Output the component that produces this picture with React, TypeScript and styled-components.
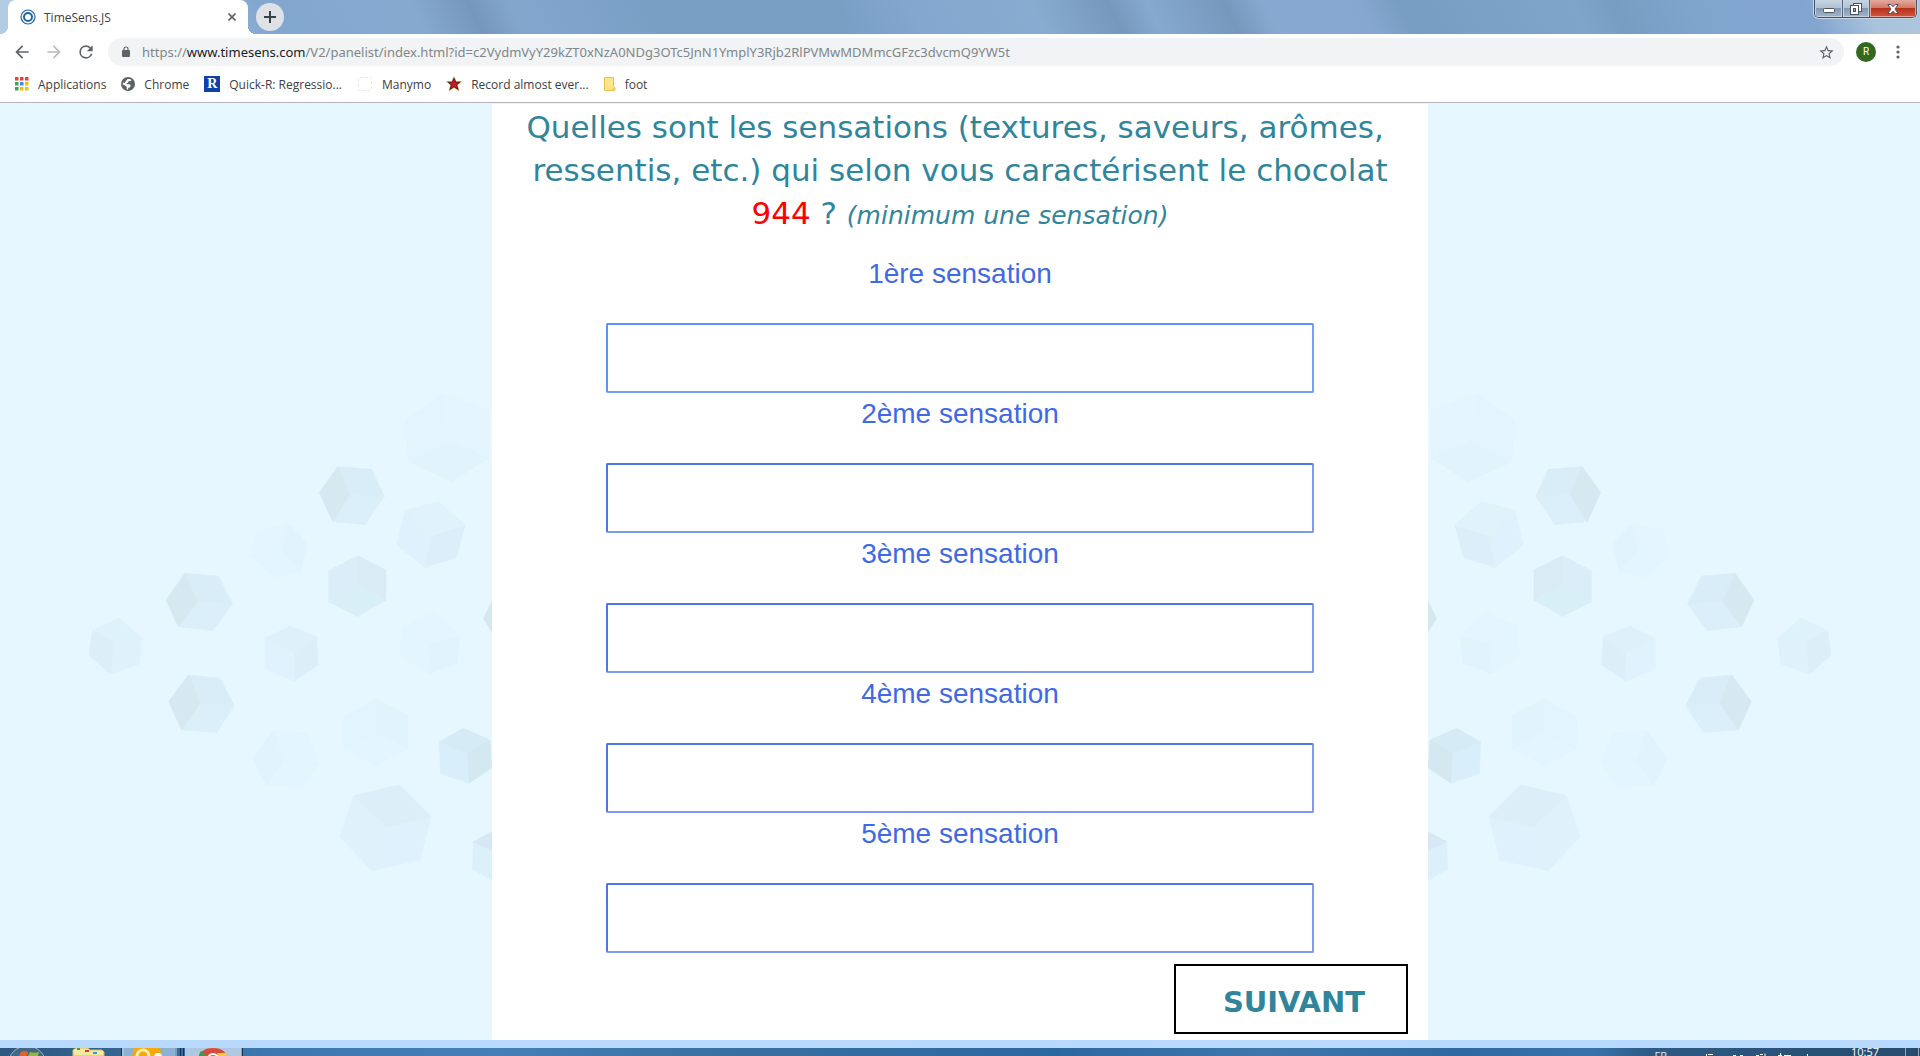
import React from 'react';
import styled, { createGlobalStyle } from 'styled-components';

const GlobalStyle = createGlobalStyle`
  * { box-sizing: border-box; }
  body { margin: 0; }
  button, input { font: inherit; margin: 0; padding: 0; }
  button { border: 0; background: none; color: inherit; cursor: pointer; }
  svg { display: block; flex: none; }
`;

const UI = '"Open Sans", "Noto Sans", sans-serif';
const VERDANA = 'Verdana, "DejaVu Sans", sans-serif';
const TEAL = '#31859b';

const Window = styled.div`
  display: flex;
  flex-direction: column;
  min-height: 100vh;
  background: #fff;
  font-family: ${UI};
  font-size: 12px;
  color: #3c4043;
`;

/* ---------- title bar ---------- */

const TitleBar = styled.header`
  display: flex;
  align-items: flex-start;
  height: 34px;
  background: linear-gradient(
    64deg,
    #b5cde3 0%, #a9c5df 8%, #82a7cf 14%, #86a9cf 22%, #7597bd 25%, #83a6cd 27%,
    #7a9fc5 34%, #7a9fc5 44%, #84a7cf 48%, #88abd0 54%, #7698bd 58%, #86a9cf 60%,
    #7698bd 64%, #87a9d0 66%, #86a8d0 71%, #789dc2 73%, #80a5cb 82%, #789dc2 84%,
    #80a5cd 88%, #82a5d0 94%, #a8c3dc 97%, #adc6dd 100%
  );
`;

const Tab = styled.div`
  position: relative;
  display: flex;
  align-items: center;
  width: 240px;
  height: 34px;
  margin-left: 8px;
  padding: 0 6px 0 12px;
  gap: 8px;
  border-radius: 8px 8px 0 0;
  background: #fff;
  &::before, &::after {
    content: '';
    position: absolute;
    bottom: 0;
    width: 8px;
    height: 8px;
  }
  &::before { right: 100%; background: radial-gradient(circle at 0 0, transparent 8px, #fff 8px); }
  &::after { left: 100%; background: radial-gradient(circle at 100% 0, transparent 8px, #fff 8px); }
`;

const TabTitle = styled.span`
  flex: 1;
  font-size: 12px;
`;

const IconButton = styled.button`
  display: grid;
  place-items: center;
  width: 20px;
  height: 28px;
`;

const NewTab = styled.button`
  display: grid;
  place-items: center;
  width: 28px;
  height: 28px;
  margin: 3px 0 0 8px;
  border-radius: 50%;
  background: #dee1e6;
`;

const WindowControls = styled.div`
  display: flex;
  height: 18px;
  margin: 0 3px 0 auto;
  border: 1px solid #444f5f;
  border-top: 0;
  border-radius: 0 0 5px 5px;
  box-shadow: 0 0 0 1px #c8d7e6;
  overflow: hidden;
`;

const ControlButton = styled.button<{ $close?: boolean }>`
  display: grid;
  place-items: center;
  width: ${p => (p.$close ? 47 : 27)}px;
  height: 17px;
  border-left: ${p => (p.$close ? '1px solid #4d1a14' : '0')};
  box-shadow: inset 0 0 0 1px ${p => (p.$close ? '#e2a79c' : '#c5d2e0')};
  background: ${p => (p.$close
    ? 'linear-gradient(#e3a99e 0, #d27866 8px, #b5301a 8px, #d4573c 17px)'
    : 'linear-gradient(#c7d3e1 0, #b1c1d3 8px, #7f97b1 8px, #a3b7cc 17px)')};
  & + & { border-left: 1px solid #56657a; }
`;

/* ---------- toolbar ---------- */

const Toolbar = styled.nav`
  display: flex;
  align-items: center;
  height: 36px;
  padding: 4px 12px;
  gap: 12px;
`;

const Omnibox = styled.div`
  display: flex;
  flex: 1;
  align-items: center;
  height: 28px;
  padding: 0 8px 0 14px;
  gap: 12px;
  border-radius: 14px;
  background: #f1f3f4;
`;

const Address = styled.span`
  flex: 1;
  font-family: "Noto Sans", sans-serif;
  font-size: 13px;
  color: #80868b;
  white-space: nowrap;
  overflow: hidden;
  b { font-weight: 400; color: #202124; }
`;

const Avatar = styled.button`
  width: 20px;
  height: 20px;
  border-radius: 50%;
  background: #33691e;
  color: #fff;
  font: 10px/20px Roboto, sans-serif;
`;

const Bookmarks = styled.nav`
  display: flex;
  align-items: center;
  height: 33px;
  padding: 0 15px 4px;
  gap: 15px;
  border-bottom: 1px solid #b6b4b6;
`;

const Bookmark = styled.a`
  display: flex;
  align-items: center;
  gap: 9px;
  font-size: 12px;
  color: #3c4043;
  text-decoration: none;
  white-space: nowrap;
`;

/* ---------- survey page ---------- */

const Page = styled.main`
  position: relative;
  display: flex;
  flex: 1;
  justify-content: center;
  padding-top: 1px;
  background: #e7f7ff;
  overflow: hidden;
`;

const CubeField = styled.svg<{ $mirrored?: boolean }>`
  position: absolute;
  top: 1px;
  ${p => (p.$mirrored ? 'left: 50%; transform: scaleX(-1);' : 'right: 50%;')}
`;

const Sheet = styled.form`
  position: relative;
  display: flex;
  flex-direction: column;
  width: 48.75%;
  padding: 2px 20px 6px;
  background: #fff;
`;

const Question = styled.h1`
  margin: 0 0 23px;
  font: 400 31px/43px ${VERDANA};
  color: ${TEAL};
  text-align: center;
  em { font-size: 25px; line-height: 1; }
`;

const ProductCode = styled.span`
  color: #f00;
`;

const Fields = styled.div`
  display: flex;
  flex-direction: column;
  align-items: center;
  gap: 5px;
`;

const Field = styled.label`
  display: flex;
  flex-direction: column;
  width: 79%;
  gap: 33px;
  font: 28px/32px "Liberation Sans", Arial, sans-serif;
  color: #4169e1;
  text-align: center;
`;

const Answer = styled.input<{ $active?: boolean }>`
  width: 100%;
  height: 70px;
  padding: 0 12px;
  border: 2px solid ${p => (p.$active ? '#5f92f6' : '#4f76e4')};
  border-right-color: ${p => (p.$active ? '#74a0f8' : '#809aec')};
  border-bottom-color: ${p => (p.$active ? '#74a0f8' : '#809aec')};
  border-radius: 2px;
  background: #fff;
  color: inherit;
  outline: 0;
`;

const NextButton = styled.button`
  align-self: flex-end;
  width: 234px;
  height: 70px;
  margin-top: 11px;
  padding: 6px 0 0 6px;
  border: 2px solid #000;
  background: #fff;
  font: 700 29px/32px ${VERDANA};
  color: ${TEAL};
`;

/* ---------- taskbar ---------- */

const Taskbar = styled.footer`
  height: 16px;
  border-top: 8px solid #b8dafe;
  overflow: hidden;
`;

const TaskRow = styled.div`
  display: flex;
  align-items: flex-start;
  height: 40px;
  background: linear-gradient(90deg, #2d587f 0, #33648f 6%, #3d77ae 14%, #457fb5 26%, #38709f 38%, #2c68a0 55%, #3f77aa 66%, #2e699f 76%, #3873a9 83%, #2d5a83 86%, #264b6f 100%);
`;

const TaskArt = styled.svg`
  width: 260px;
  height: 8px;
`;

const Tray = styled.div`
  display: flex;
  align-items: flex-start;
  margin-left: auto;
  padding-right: 1px;
  font-size: 11px;
  line-height: 8px;
  color: #fff;
`;

const Language = styled.span`
  padding: 4px 36px 0 0;
  opacity: 0.85;
`;

const Clock = styled.time`
  padding-left: 36px;
  margin-right: 26px;
`;

/* ---------- drawings ---------- */

type Pt = [number, number];
type Cube = { v: Pt[]; c: Pt; f: [string, string, string] };

const STRONG: [string, string, string] = ['#d8edf8', '#dbeffb', '#d6e9f1'];
const SOFT: [string, string, string] = ['#dceef9', '#dff1fc', '#e0f2fa'];
const FAINT: [string, string, string] = ['#e1f3fb', '#e3f5fd', '#e4f5fd'];

const CUBES: Cube[] = [
  { v: [[1150, 40], [1285, 90], [1285, 235], [1175, 305], [1045, 245], [1035, 120]], c: [1165, 180], f: ['#e4f5fd', '#e1f3fb', '#e3f4fc'] },
  { v: [[833, 260], [935, 268], [973, 350], [915, 434], [818, 425], [778, 338]], c: [870, 345], f: STRONG },
  { v: [[1215, 435], [1190, 532], [1095, 562], [1010, 495], [1035, 392], [1135, 365]], c: [1110, 470], f: SOFT },
  { v: [[685, 432], [742, 490], [722, 572], [650, 594], [575, 530], [590, 450]], c: [660, 510], f: FAINT },
  { v: [[893, 527], [978, 570], [978, 660], [893, 710], [806, 665], [806, 572]], c: [893, 618], f: ['#d9ebf4', '#d9eff6', '#dbedf9'] },
  { v: [[375, 580], [475, 588], [517, 672], [458, 752], [355, 740], [318, 660]], c: [412, 665], f: STRONG },
  { v: [[247, 775], [237, 852], [152, 882], [87, 825], [97, 750], [178, 715]], c: [160, 785], f: ['#dff1fb', '#dceff9', '#def2f9'] },
  { v: [[770, 770], [775, 855], [703, 903], [615, 865], [615, 775], [690, 738]], c: [700, 818], f: ['#dceff9', '#dff2fd', '#def0f9'] },
  { v: [[1200, 770], [1190, 850], [1105, 882], [1020, 825], [1030, 740], [1125, 697]], c: [1110, 790], f: FAINT },
  { v: [[385, 885], [480, 895], [523, 978], [470, 1057], [365, 1050], [326, 965]], c: [420, 970], f: STRONG },
  { v: [[948, 957], [1042, 1003], [1042, 1105], [948, 1155], [852, 1108], [850, 1010]], c: [948, 1060], f: ['#e1f3fb', '#e3f5fe', '#e2f4fc'] },
  { v: [[640, 1052], [740, 1060], [778, 1150], [730, 1222], [620, 1215], [578, 1135]], c: [668, 1140], f: ['#e3f5fe', '#e3f5fd', '#e1f3fb'] },
  { v: [[1290, 1080], [1295, 1165], [1226, 1210], [1142, 1180], [1138, 1085], [1210, 1045]], c: [1220, 1120], f: ['#d3e8f1', '#d9eefb', '#d5ebf5'] },
  { v: [[1113, 1310], [1080, 1440], [935, 1472], [840, 1370], [880, 1247], [1018, 1215]], c: [980, 1340], f: ['#def1fd', '#dff1fb', '#dceef8'] },
  { v: [[1400, 1385], [1400, 1468], [1320, 1515], [1238, 1468], [1240, 1385], [1320, 1342]], c: [1320, 1425], f: ['#dcf0fb', '#dcf0fb', '#d6e8f6'] },
  { v: [[1330, 600], [1420, 610], [1460, 700], [1400, 790], [1310, 780], [1270, 715]], c: [1360, 700], f: ['#d4e8ee', '#d4e8ee', '#d4e8ee'] },
];

const Cubes = ({ mirrored }: { mirrored?: boolean }) => (
  <CubeField $mirrored={mirrored} width="960" height="936" aria-hidden="true">
    <g transform="translate(60 276) scale(.33333)">
      {CUBES.map(({ v, c, f }, i) => (
        <g key={i}>
          {f.map((fill, k) => {
            const pts = [v[k * 2], v[k * 2 + 1], v[(k * 2 + 2) % 6], c];
            return <polygon key={k} points={pts.map(p => p.join(',')).join(' ')} fill={fill} stroke={fill} strokeWidth="2" />;
          })}
        </g>
      ))}
    </g>
  </CubeField>
);

const Glyph = ({ d, size = 20, fill = '#5f6368' }: { d: string; size?: number; fill?: string }) => (
  <svg width={size} height={size} viewBox="0 0 24 24" fill={fill} aria-hidden="true"><path d={d} /></svg>
);

const AppsIcon = () => (
  <svg width="14" height="14" viewBox="0 0 14 14" aria-hidden="true">
    {['#ea4335', '#ea4335', '#ea4335', '#34a853', '#4285f4', '#fbbc05', '#34a853', '#fbbc05', '#fbbc05'].map((c, i) => (
      <rect key={i} x={(i % 3) * 5} y={Math.floor(i / 3) * 5} width="3.500" height="3.500" fill={c} />
    ))}
  </svg>
);

const GlobeIcon = () => (
  <svg width="14" height="14" viewBox="0 0 14 14" aria-hidden="true">
    <circle cx="7" cy="7" r="7" fill="#5f6368" />
    <path d="M6.200 2.200C8 1.600 9.600 2 10.600 3.200L9 4.300H7.400L7 5.800 5.400 6.200 6 7.200H8.600L9.800 8.600 9 10.200 7.600 10.800 6.800 12.400 5.600 12.200 5.800 10 4.200 8.600 1.800 7.400 2 5.600 3.600 6 4.600 4.600Z" fill="#fff" />
  </svg>
);

const RIcon = styled.span`
  width: 16px;
  height: 16px;
  background: #1041a8;
  color: #fff;
  font: 700 14px/16px "Liberation Serif", serif;
  text-align: center;
`;

const BlankIcon = styled.span`
  width: 14px;
  height: 14px;
  margin: 0 1px;
  border: 1px dashed #e4e5e8;
  border-radius: 2px;
`;

const StarIcon = () => (
  <svg width="16" height="16" viewBox="0 0 16 16" aria-hidden="true">
    <path d="M8 .8 10.200 5.600h5.200l-4 3.500 1.600 5.600L8 11.600 3 14.700l1.600-5.600-4-3.500h5.200Z" fill="#3a2008" stroke="#d9a441" strokeWidth=".5" />
    <path d="M8 3 9.500 6.600h3.400l-2.700 2.300 1 3.600L8 10.500l-3.200 2 1-3.600-2.700-2.300h3.400Z" fill="#d0142c" />
  </svg>
);

const FolderIcon = () => (
  <svg width="12" height="16" viewBox="0 0 12 16" aria-hidden="true">
    <path d="M.5 1.500h9v9l1.500 1v3H.5Z" fill="#ffe389" stroke="#e8c24c" />
    <path d="M9 14.500v-3" stroke="#e8c24c" />
  </svg>
);

const BOOKMARKS = [
  { label: 'Applications', icon: <AppsIcon /> },
  { label: 'Chrome', icon: <GlobeIcon /> },
  { label: 'Quick-R: Regressio...', icon: <RIcon aria-hidden="true">R</RIcon> },
  { label: 'Manymo', icon: <BlankIcon /> },
  { label: 'Record almost ever...', icon: <StarIcon /> },
  { label: 'foot', icon: <FolderIcon /> },
];

const FIELDS = ['1ère sensation', '2ème sensation', '3ème sensation', '4ème sensation', '5ème sensation'];

export default function App() {
  return (
    <Window>
      <GlobalStyle />
      <TitleBar>
        <Tab>
          <svg width="16" height="16" viewBox="0 0 16 16" fill="none" stroke="#1c64a8" aria-hidden="true">
            <circle cx="8" cy="8" r="7" strokeWidth="1.200" />
            <circle cx="8" cy="8" r="4" strokeWidth="2" />
          </svg>
          <TabTitle>TimeSens.JS</TabTitle>
          <IconButton aria-label="Fermer l'onglet">
            <svg width="8" height="8" viewBox="0 0 8 8" stroke="#5f6368" strokeWidth="1.600"><path d="M.5.5l7 7M7.500.5l-7 7" /></svg>
          </IconButton>
        </Tab>
        <NewTab aria-label="Nouvel onglet">
          <svg width="12" height="12" viewBox="0 0 12 12" stroke="#3c4043" strokeWidth="2"><path d="M6 0v12M0 6h12" /></svg>
        </NewTab>
        <WindowControls>
          <ControlButton aria-label="Réduire">
            <svg width="12" height="17" viewBox="0 0 12 17"><rect x=".5" y="8.500" width="11" height="4" rx="1" fill="#fff" stroke="#4a5363" /></svg>
          </ControlButton>
          <ControlButton aria-label="Restaurer">
            <svg width="12" height="12" viewBox="0 0 12 12" fill="#fff" stroke="#4a5363">
              <rect x="3.500" y=".5" width="8" height="8" />
              <rect x=".5" y="2.500" width="8" height="9" />
              <rect x="3.500" y="5.500" width="2" height="3" fill="#8da1b8" />
            </svg>
          </ControlButton>
          <ControlButton $close aria-label="Fermer">
            <svg width="12" height="10" viewBox="0 0 12 10">
              <path d="M.8.5h3L6 2.800 8.200.5h3L8 5l3.200 4.500h-3L6 7.200 3.800 9.500h-3L4 5Z" fill="#fff" stroke="#50525f" />
            </svg>
          </ControlButton>
        </WindowControls>
      </TitleBar>

      <Toolbar>
        <IconButton aria-label="Précédent"><Glyph d="M20 11H7.830l5.590-5.590L12 4l-8 8 8 8 1.410-1.410L7.830 13H20v-2z" /></IconButton>
        <IconButton aria-label="Suivant"><Glyph fill="#babcbe" d="M12 4l-1.410 1.410L16.170 11H4v2h12.170l-5.580 5.590L12 20l8-8z" /></IconButton>
        <IconButton aria-label="Actualiser"><Glyph d="M17.650 6.350A7.958 7.958 0 0 0 12 4a8 8 0 1 0 7.730 10h-2.080A6 6 0 1 1 12 6c1.660 0 3.140.69 4.220 1.780L13 11h7V4l-2.350 2.350z" /></IconButton>
        <Omnibox>
          <svg width="8" height="12" viewBox="0 0 8 12" aria-hidden="true">
            <rect y="4" width="8" height="7" rx="1" fill="#5f6368" />
            <path d="M2 5V3a2 2 0 0 1 4 0v2" fill="none" stroke="#5f6368" strokeWidth="1.200" />
          </svg>
          <Address>
            https://<b>www.timesens.com</b>/V2/panelist/index.html?id=c2VydmVyY29kZT0xNzA0NDg3OTc5JnN1YmplY3Rjb2RlPVMwMDMmcGFzc3dvcmQ9YW5t
          </Address>
          <IconButton aria-label="Ajouter aux favoris">
            <Glyph size={17} d="M22 9.240l-7.190-.62L12 2 9.190 8.630 2 9.240l5.460 4.730L5.820 21 12 17.270 18.180 21l-1.630-7.030L22 9.240zM12 15.400l-3.760 2.270 1-4.280-3.320-2.880 4.380-.38L12 6.100l1.710 4.040 4.380.38-3.320 2.880 1 4.280L12 15.400z" />
          </IconButton>
        </Omnibox>
        <Avatar aria-label="Profil">R</Avatar>
        <IconButton aria-label="Menu">
          <svg width="4" height="14" viewBox="0 0 4 14" fill="#5f6368"><circle cx="2" cy="2" r="1.600" /><circle cx="2" cy="7" r="1.600" /><circle cx="2" cy="12" r="1.600" /></svg>
        </IconButton>
      </Toolbar>

      <Bookmarks>
        {BOOKMARKS.map(b => (
          <Bookmark key={b.label} href="#">{b.icon}{b.label}</Bookmark>
        ))}
      </Bookmarks>

      <Page>
        <Cubes />
        <Cubes mirrored />
        <Sheet onSubmit={e => e.preventDefault()}>
          <Question>
            Quelles sont les sensations (textures, saveurs, arômes,&nbsp;<br />
            ressentis, etc.) qui selon vous caractérisent le chocolat<br />
            <ProductCode>944</ProductCode> ? <em>(minimum une sensation)</em>
          </Question>
          <Fields>
            {FIELDS.map((label, i) => (
              <Field key={label}>
                {label}
                <Answer type="text" $active={i === 0} />
              </Field>
            ))}
          </Fields>
          <NextButton type="submit">SUIVANT</NextButton>
        </Sheet>
      </Page>

      <Taskbar>
        <TaskRow>
          <TaskArt viewBox="0 0 260 8" aria-hidden="true">
            <circle cx="27" cy="17" r="19" fill="#446781" stroke="#9db7c9" />
            <path d="M19 8c1-5 5-6 9-4l-1 4Z" fill="#e2622b" />
            <path d="M28 8l2-4c3 1 6 1 9 0l-1 4Z" fill="#8abb3f" />
            <path d="M73 8V2l3-2h12l2 2h12l2 2v4Z" fill="#f7e7a2" stroke="#d9bd62" />
            <path d="M77 0h3v2h-3Z" fill="#21b14c" /><path d="M85 2h4v2h-4Z" fill="#d0402d" /><path d="M93 4h4v2h-4Z" fill="#2d9be0" />
            <rect x="122" width="53" height="8" fill="#8db1d3" /><path d="M121.500 0v8M180.500 0v8M183.500 0v8M242.500 0v8" stroke="#15334e" />
            <path d="M176 0v8M123 0v8M241 0v8" stroke="#bdd3e8" />
            <path d="M132 8l2-8h26l2 8Z" fill="#f5a90b" />
            <circle cx="143" cy="8" r="6" fill="#f5a90b" stroke="#fff0b0" strokeWidth="3" />
            <circle cx="158" cy="9" r="4" fill="#fff" />
            <rect x="185" width="56" height="8" fill="#afc8e0" />
            <path d="M199 8c2-5 6-8 14-8s12 3 14 8Z" fill="#d94a3a" />
            <path d="M199 8c0-2 1-4 2-5l6 5Z" fill="#3c9b4a" /><path d="M217 5h9l1 3h-9Z" fill="#f6c83c" />
            <circle cx="213" cy="11" r="5" fill="#4a87e0" stroke="#fff" strokeWidth="2" />
          </TaskArt>
          <Tray>
            <Language>FR</Language>
            <svg width="112" height="8" viewBox="0 0 112 8" stroke="#fff" fill="#fff" aria-hidden="true">
              <path d="M3.500 8V6M5 6.500h5M30 7.500h3M37 7.500h3M53 7.500h3M57 6.500h3M62 5.500v3M75 7.500h4M77.500 5v3M81 7.500h7M104.500 6v2" />
            </svg>
            <Clock>10:57</Clock>
            <svg width="14" height="8" viewBox="0 0 14 8" fill="none" stroke="#93a9bd" aria-hidden="true"><path d="M.5 0v8M13.500 0v8" /></svg>
          </Tray>
        </TaskRow>
      </Taskbar>
    </Window>
  );
}
